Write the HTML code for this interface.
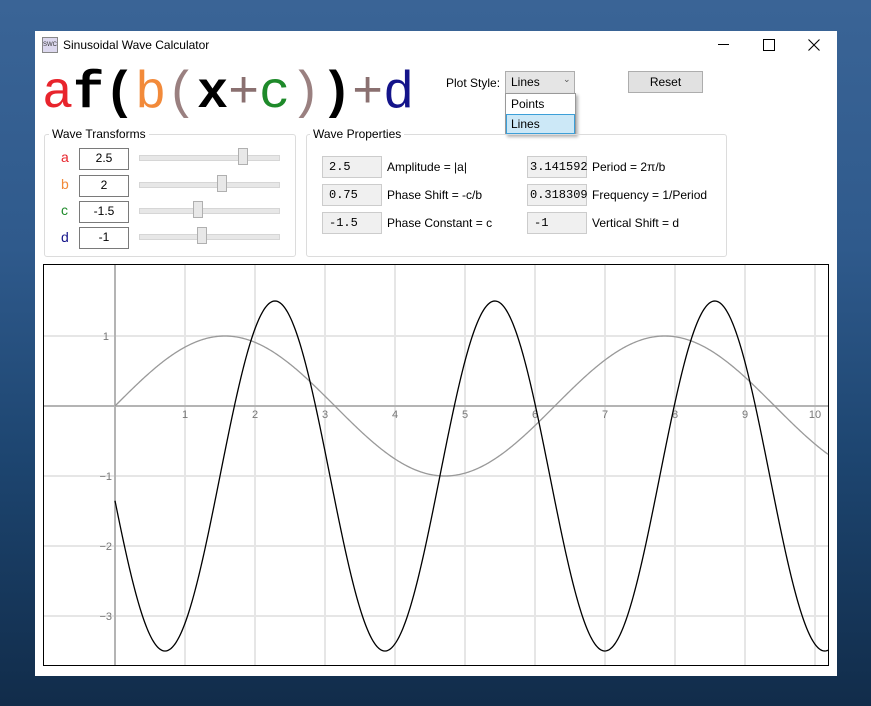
<!DOCTYPE html>
<html><head><meta charset="utf-8"><style>
body{margin:0;width:871px;height:706px;overflow:hidden;background:linear-gradient(180deg,#3a6496 0%,#2f5a8c 35%,#1d4570 65%,#112c4a 100%);font-family:"Liberation Sans",sans-serif;position:relative}
.a{position:absolute}
.win{left:35px;top:31px;width:802px;height:645px;background:#fff}
.t{font-size:12px;color:#000}
.tb{background:#fff;border:1px solid #7a7a7a;box-sizing:border-box;font-size:12px;text-align:center;line-height:19px}
.ro{background:#f0f0f0;border:1px solid #ccc;box-sizing:border-box;font-family:"Liberation Mono",monospace;font-size:12px;padding-left:6px;line-height:20px}
.grp{border:1px solid #dcdcdc;border-radius:3px;box-sizing:border-box}
.gl{background:#fff;padding:0 3px;font-size:12px}
.track{height:4px;background:#e7e7e7;border:1px solid #d6d6d6;width:139px;left:139px}
.thumb{width:10px;height:17px;background:#e8e8e8;border:1px solid #b0b0b0;box-sizing:border-box}
.f{font-family:"Liberation Mono",monospace;font-size:52px;line-height:56px;top:66px;left:42px;white-space:pre}
.f span{display:inline-block;width:31px;text-align:center}
</style></head><body>
<div class="a win"></div>
<div class="a" style="left:42px;top:37px;width:16px;height:16px;background:#dcd8ee;border:1px solid #888;box-sizing:border-box;font-size:6px;line-height:14px;text-align:center;color:#333">SWC</div>
<div class="a t" style="left:63px;top:38px">Sinusoidal Wave Calculator</div>
<div class="a" style="left:718px;top:44px;width:11px;height:1px;background:#000"></div>
<div class="a" style="left:763px;top:39px;width:10px;height:10px;border:1px solid #000"></div>
<svg class="a" style="left:808px;top:39px" width="12" height="12"><path d="M0.5 0.5L11.5 11.5M11.5 0.5L0.5 11.5" stroke="#000" stroke-width="1.1"/></svg>
<div class="a f"><span style="color:#e8242c">a</span><span style="font-weight:bold">f</span><span style="font-weight:bold">(</span><span style="color:#f28a3a">b</span><span style="color:#9a8080">(</span><span style="font-weight:bold">x</span><span style="color:#8a7070">+</span><span style="color:#1e8a2a">c</span><span style="color:#9a8080">)</span><span style="font-weight:bold">)</span><span style="color:#8a7070">+</span><span style="color:#14148a">d</span></div>
<div class="a t" style="left:446px;top:76px">Plot Style:</div>
<div class="a" style="left:505px;top:71px;width:70px;height:23px;border:1px solid #adadad;background:#e5e5e5;box-sizing:border-box"></div>
<div class="a t" style="left:511px;top:75px">Lines</div>
<div class="a" style="left:563px;top:74px;font-size:9px;color:#555">⌄</div>
<div class="a" style="left:505px;top:93px;width:71px;height:42px;border:1px solid #999;background:#fff;box-sizing:border-box;box-shadow:2px 2px 3px rgba(0,0,0,.3)"></div>
<div class="a t" style="left:511px;top:97px">Points</div>
<div class="a" style="left:506px;top:114px;width:69px;height:20px;background:#cce8f7;border:1px solid #3c9fd8;box-sizing:border-box"></div>
<div class="a t" style="left:511px;top:117px">Lines</div>
<div class="a" style="left:628px;top:71px;width:75px;height:22px;border:1px solid #adadad;background:#e1e1e1;box-sizing:border-box;font-size:12px;text-align:center;line-height:20px">Reset</div>

<div class="a grp" style="left:44px;top:134px;width:252px;height:123px"></div>
<div class="a gl" style="left:49px;top:127px">Wave Transforms</div>
<div class="a grp" style="left:306px;top:134px;width:421px;height:123px"></div>
<div class="a gl" style="left:310px;top:127px">Wave Properties</div>

<div class="a" style="left:61px;top:149px;font-size:14px;color:#e8242c">a</div>
<div class="a" style="left:61px;top:176px;font-size:14px;color:#f28a3a">b</div>
<div class="a" style="left:61px;top:202px;font-size:14px;color:#1e8a2a">c</div>
<div class="a" style="left:61px;top:229px;font-size:14px;color:#14148a">d</div>
<div class="a tb" style="left:79px;top:148px;width:50px;height:22px">2.5</div>
<div class="a tb" style="left:79px;top:175px;width:50px;height:22px">2</div>
<div class="a tb" style="left:79px;top:201px;width:50px;height:22px">-1.5</div>
<div class="a tb" style="left:79px;top:227px;width:50px;height:22px">-1</div>
<div class="a track" style="top:155px"></div><div class="a thumb" style="left:238px;top:148px"></div>
<div class="a track" style="top:182px"></div><div class="a thumb" style="left:217px;top:175px"></div>
<div class="a track" style="top:208px"></div><div class="a thumb" style="left:193px;top:201px"></div>
<div class="a track" style="top:234px"></div><div class="a thumb" style="left:197px;top:227px"></div>

<div class="a ro" style="left:322px;top:156px;width:60px;height:22px">2.5</div>
<div class="a ro" style="left:322px;top:184px;width:60px;height:22px">0.75</div>
<div class="a ro" style="left:322px;top:212px;width:60px;height:22px">-1.5</div>
<div class="a t" style="left:387px;top:160px">Amplitude = |a|</div>
<div class="a t" style="left:387px;top:188px">Phase Shift = -c/b</div>
<div class="a t" style="left:387px;top:216px">Phase Constant = c</div>
<div class="a ro" style="left:527px;top:156px;width:60px;height:22px;padding-left:2px">3.141592</div>
<div class="a ro" style="left:527px;top:184px;width:60px;height:22px;padding-left:2px">0.318309</div>
<div class="a ro" style="left:527px;top:212px;width:60px;height:22px">-1</div>
<div class="a t" style="left:592px;top:160px">Period = 2π/b</div>
<div class="a t" style="left:592px;top:188px">Frequency = 1/Period</div>
<div class="a t" style="left:592px;top:216px">Vertical Shift = d</div>

<svg class="a" id="p" style="left:43px;top:264px" width="787" height="402" viewBox="43 264 787 402">
<rect x="43.5" y="264.5" width="785" height="401" fill="#fff" stroke="#000"/>
<g stroke="#e6e6e6" stroke-width="2">
<path d="M185 265V665M255 265V665M325 265V665M395 265V665M465 265V665M535 265V665M605 265V665M675 265V665M745 265V665M815 265V665M44 336H828M44 476H828M44 546H828M44 616H828"/>
</g>
<path d="M115 265V665M44 406H828" stroke="#b4b4b4" stroke-width="2"/>
<g font-family="Liberation Sans,sans-serif" font-size="11" fill="#777" text-anchor="middle">
<text x="185" y="418">1</text><text x="255" y="418">2</text><text x="325" y="418">3</text><text x="395" y="418">4</text><text x="465" y="418">5</text><text x="535" y="418">6</text><text x="605" y="418">7</text><text x="675" y="418">8</text><text x="745" y="418">9</text><text x="815" y="418">10</text>
<text x="109" y="340" text-anchor="end">1</text><text x="112" y="480" text-anchor="end">−1</text><text x="112" y="550" text-anchor="end">−2</text><text x="112" y="620" text-anchor="end">−3</text>
</g>
<path id="g" fill="none" stroke="#999" stroke-width="1.3"/>
<path id="k" fill="none" stroke="#000" stroke-width="1.3"/>
</svg>
<script>
function mk(f){var d="";for(var px=115;px<=828;px+=1){var x=(px-115)/70;var y=406-70*f(x);d+=(d?"L":"M")+px+" "+y.toFixed(2);}return d;}
document.getElementById("g").setAttribute("d",mk(function(x){return Math.sin(x)}));
document.getElementById("k").setAttribute("d",mk(function(x){return 2.5*Math.sin(2*(x-1.5))-1}));
</script>
</body></html>
